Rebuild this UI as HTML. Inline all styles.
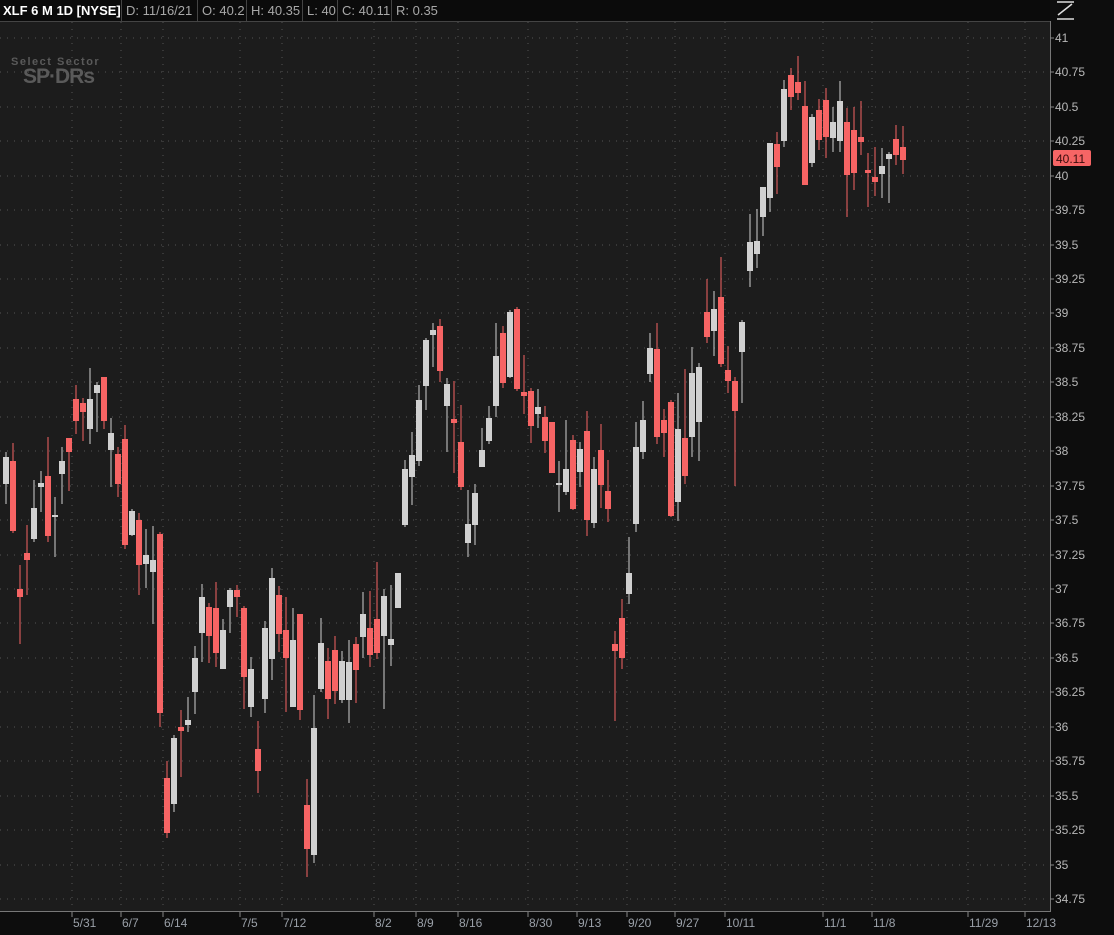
<!DOCTYPE html>
<html><head><meta charset="utf-8"><style>
html,body{margin:0;padding:0;background:#0c0c0c;width:1114px;height:935px;overflow:hidden;font-family:"Liberation Sans",sans-serif}
.hdr{position:absolute;left:0;top:0;height:21px;width:1050px;background:#0b0b0b;border-bottom:1px solid #444;font-size:13px;line-height:21px;color:#a8a8a8}
.hdr span{position:absolute;top:0;padding-left:4px;border-left:1px solid #444;height:21px}
</style></head><body>
<div class="hdr">
<span style="left:0;border:none;color:#fff;font-weight:bold;padding-left:3px">XLF 6 M 1D [NYSE]</span>
<span style="left:121px">D: 11/16/21</span>
<span style="left:197px">O: 40.2</span>
<span style="left:246px">H: 40.35</span>
<span style="left:302px">L: 40</span>
<span style="left:337px">C: 40.11</span>
<span style="left:391px">R: 0.35</span>
</div>
<svg width="1114" height="935" style="position:absolute;left:0;top:0" xmlns="http://www.w3.org/2000/svg">
<rect x="0" y="22" width="1050" height="889" fill="#1c1c1c"/>
<rect x="1050" y="0" width="64" height="935" fill="#0d0d0d"/>
<rect x="0" y="911" width="1050" height="24" fill="#0d0d0d"/>
<line x1="1050.5" y1="21" x2="1050.5" y2="911" stroke="#777"/>
<line x1="0" y1="911.5" x2="1051" y2="911.5" stroke="#777"/>
<g stroke="#555" stroke-dasharray="1 6" stroke-width="1" shape-rendering="crispEdges">
<path d="M0 38H1050M0 72H1050M0 107H1050M0 141H1050M0 176H1050M0 210H1050M0 245H1050M0 279H1050M0 313H1050M0 348H1050M0 382H1050M0 417H1050M0 451H1050M0 486H1050M0 520H1050M0 555H1050M0 589H1050M0 623H1050M0 658H1050M0 692H1050M0 727H1050M0 761H1050M0 796H1050M0 830H1050M0 865H1050M0 899H1050"/>
<path d="M72 22V911M121 22V911M163 22V911M240 22V911M282 22V911M374 22V911M416 22V911M458 22V911M528 22V911M577 22V911M627 22V911M675 22V911M725 22V911M823 22V911M872 22V911M968 22V911M1025 22V911"/>
</g>
<g stroke="#888" shape-rendering="crispEdges">
<path d="M72 912V917M121 912V917M163 912V917M240 912V917M282 912V917M374 912V917M416 912V917M458 912V917M528 912V917M577 912V917M627 912V917M675 912V917M725 912V917M823 912V917M872 912V917M968 912V917M1025 912V917"/>
<path d="M1050 38H1054M1050 72H1054M1050 107H1054M1050 141H1054M1050 176H1054M1050 210H1054M1050 245H1054M1050 279H1054M1050 313H1054M1050 348H1054M1050 382H1054M1050 417H1054M1050 451H1054M1050 486H1054M1050 520H1054M1050 555H1054M1050 589H1054M1050 623H1054M1050 658H1054M1050 692H1054M1050 727H1054M1050 761H1054M1050 796H1054M1050 830H1054M1050 865H1054M1050 899H1054"/>
</g>
<text x="11" y="65" font-size="11" font-weight="bold" fill="#5a5a5a" letter-spacing="1.5" font-family="Liberation Sans">Select Sector</text>
<text x="23" y="83" font-size="21" font-weight="bold" fill="#5a5a5a" letter-spacing="-1" font-family="Liberation Sans">SP·DRs</text>
<g font-size="12" fill="#b8b8b8" font-family="Liberation Sans">
<text x="1055" y="42">41</text><text x="1055" y="76">40.75</text><text x="1055" y="111">40.5</text><text x="1055" y="145">40.25</text><text x="1055" y="180">40</text><text x="1055" y="214">39.75</text><text x="1055" y="249">39.5</text><text x="1055" y="283">39.25</text><text x="1055" y="317">39</text><text x="1055" y="352">38.75</text><text x="1055" y="386">38.5</text><text x="1055" y="421">38.25</text><text x="1055" y="455">38</text><text x="1055" y="490">37.75</text><text x="1055" y="524">37.5</text><text x="1055" y="559">37.25</text><text x="1055" y="593">37</text><text x="1055" y="627">36.75</text><text x="1055" y="662">36.5</text><text x="1055" y="696">36.25</text><text x="1055" y="731">36</text><text x="1055" y="765">35.75</text><text x="1055" y="800">35.5</text><text x="1055" y="834">35.25</text><text x="1055" y="869">35</text><text x="1055" y="903">34.75</text>
</g>
<rect x="1053" y="150" width="38" height="16" rx="2" fill="#f66565"/>
<text x="1056" y="163" font-size="12" fill="#3a0d0d" font-family="Liberation Sans">40.11</text>
<g stroke="#ddd" stroke-width="1.5" fill="none">
<path d="M1057 2H1074M1057 19H1074M1058 15L1072 4"/>
</g>
<g font-size="12" fill="#9aa0a8" font-family="Liberation Sans">
<text x="73" y="927">5/31</text><text x="122" y="927">6/7</text><text x="164" y="927">6/14</text><text x="241" y="927">7/5</text><text x="283" y="927">7/12</text><text x="375" y="927">8/2</text><text x="417" y="927">8/9</text><text x="459" y="927">8/16</text><text x="529" y="927">8/30</text><text x="578" y="927">9/13</text><text x="628" y="927">9/20</text><text x="676" y="927">9/27</text><text x="726" y="927">10/11</text><text x="824" y="927">11/1</text><text x="873" y="927">11/8</text><text x="969" y="927">11/29</text><text x="1026" y="927">12/13</text>
</g>
<g shape-rendering="crispEdges">
<path stroke="#f66464" stroke-width="1" fill="none" d="M13 443V533M20 565V644M27 525V595M48 437V542M69 438V491M76 385V434M83 398V441M104 377V429M118 447V497M125 425V549M139 513V595M160 532V727M167 761V838M181 710V777M209 603V663M216 582V667M237 585V617M244 606V709M258 721V793M279 586V652M286 597V712M300 614V720M307 779V877M328 648V719M335 636V704M356 637V703M370 591V667M377 562V659M440 319V382M454 381V473M461 405V490M503 326V388M517 307V391M524 355V414M531 388V443M545 406V453M552 422V473M573 435V510M587 411V536M601 424V508M608 460V522M615 631V721M622 599V669M657 323V444M664 409V457M671 400V517M685 369V484M707 279V343M721 257V367M728 346V393M735 377V486M777 132V194M791 68V110M798 56V100M805 81V185M819 99V150M826 88V158M847 108V217M854 107V190M861 101V155M868 153V207M875 147V196M896 125V165M903 126V174"/>
<path fill="#f66464" d="M10 461h6V531h-6zM17 589h6V597h-6zM24 553h6V560h-6zM45 476h6V536h-6zM66 438h6V452h-6zM73 399h6V421h-6zM80 403h6V412h-6zM101 377h6V421h-6zM115 454h6V484h-6zM122 439h6V545h-6zM136 520h6V565h-6zM157 534h6V713h-6zM164 778h6V833h-6zM178 727h6V731h-6zM206 607h6V636h-6zM213 608h6V653h-6zM234 590h6V597h-6zM241 608h6V677h-6zM255 749h6V771h-6zM276 595h6V634h-6zM283 630h6V658h-6zM297 614h6V710h-6zM304 805h6V849h-6zM325 661h6V699h-6zM332 650h6V691h-6zM353 644h6V670h-6zM367 628h6V655h-6zM374 619h6V653h-6zM437 326h6V371h-6zM451 419h6V423h-6zM458 442h6V487h-6zM500 333h6V383h-6zM514 309h6V389h-6zM521 392h6V396h-6zM528 391h6V426h-6zM542 417h6V441h-6zM549 422h6V473h-6zM570 440h6V509h-6zM584 431h6V520h-6zM598 450h6V485h-6zM605 491h6V509h-6zM612 644h6V651h-6zM619 618h6V658h-6zM654 349h6V437h-6zM661 420h6V433h-6zM668 402h6V516h-6zM682 438h6V476h-6zM704 312h6V337h-6zM718 297h6V364h-6zM725 370h6V381h-6zM732 381h6V411h-6zM774 144h6V167h-6zM788 75h6V97h-6zM795 82h6V93h-6zM802 106h6V185h-6zM816 110h6V140h-6zM823 100h6V137h-6zM844 122h6V175h-6zM851 130h6V173h-6zM858 137h6V142h-6zM865 170h6V173h-6zM872 177h6V182h-6zM893 139h6V155h-6zM900 147h6V160h-6z"/>
<path stroke="#d0d0d0" stroke-width="1" fill="none" d="M6 452V504M34 480V542M41 471V512M55 497V557M62 447V504M90 368V444M97 382V432M111 418V487M132 509V536M146 529V588M153 526V624M174 735V812M188 697V732M195 646V714M202 584V662M223 619V669M230 588V633M251 657V717M265 621V713M272 568V680M293 608V707M314 695V863M321 618V692M342 651V703M349 640V723M363 592V658M384 589V709M391 585V666M398 573V608M405 460V527M412 432V505M419 385V466M426 338V410M433 323V367M447 378V452M468 490V557M475 484V545M482 428V467M489 406V444M496 323V417M510 310V378M538 389V428M559 461V512M566 420V495M580 442V487M594 457V528M629 537V604M636 422V532M643 401V459M650 333V382M678 393V521M692 347V457M699 363V461M714 291V356M742 320V403M750 214V287M757 209V268M763 187V236M770 143V212M784 80V147M812 114V167M833 107V152M840 81V152M882 148V198M889 152V203"/>
<path fill="#d0d0d0" d="M3 457h6V484h-6zM31 508h6V539h-6zM38 483h6V487h-6zM52 515h6V517h-6zM59 461h6V474h-6zM87 399h6V429h-6zM94 385h6V393h-6zM108 433h6V450h-6zM129 511h6V535h-6zM143 555h6V564h-6zM150 560h6V572h-6zM171 738h6V804h-6zM185 720h6V725h-6zM192 658h6V692h-6zM199 597h6V633h-6zM220 630h6V669h-6zM227 590h6V607h-6zM248 669h6V707h-6zM262 628h6V699h-6zM269 578h6V659h-6zM290 640h6V707h-6zM311 728h6V855h-6zM318 643h6V689h-6zM339 661h6V700h-6zM346 662h6V700h-6zM360 614h6V637h-6zM381 596h6V636h-6zM388 639h6V645h-6zM395 573h6V608h-6zM402 469h6V525h-6zM409 455h6V477h-6zM416 400h6V461h-6zM423 340h6V386h-6zM430 330h6V335h-6zM444 384h6V406h-6zM465 524h6V543h-6zM472 493h6V525h-6zM479 450h6V467h-6zM486 418h6V441h-6zM493 356h6V406h-6zM507 312h6V377h-6zM535 407h6V414h-6zM556 483h6V485h-6zM563 469h6V492h-6zM577 449h6V472h-6zM591 469h6V523h-6zM626 573h6V594h-6zM633 447h6V524h-6zM640 420h6V452h-6zM647 348h6V374h-6zM675 429h6V502h-6zM689 373h6V437h-6zM696 367h6V422h-6zM711 309h6V331h-6zM739 322h6V352h-6zM747 242h6V271h-6zM754 241h6V254h-6zM760 187h6V217h-6zM767 143h6V198h-6zM781 89h6V141h-6zM809 117h6V163h-6zM830 122h6V138h-6zM837 101h6V141h-6zM879 166h6V174h-6zM886 154h6V159h-6z"/>
</g>
</svg>
</body></html>
